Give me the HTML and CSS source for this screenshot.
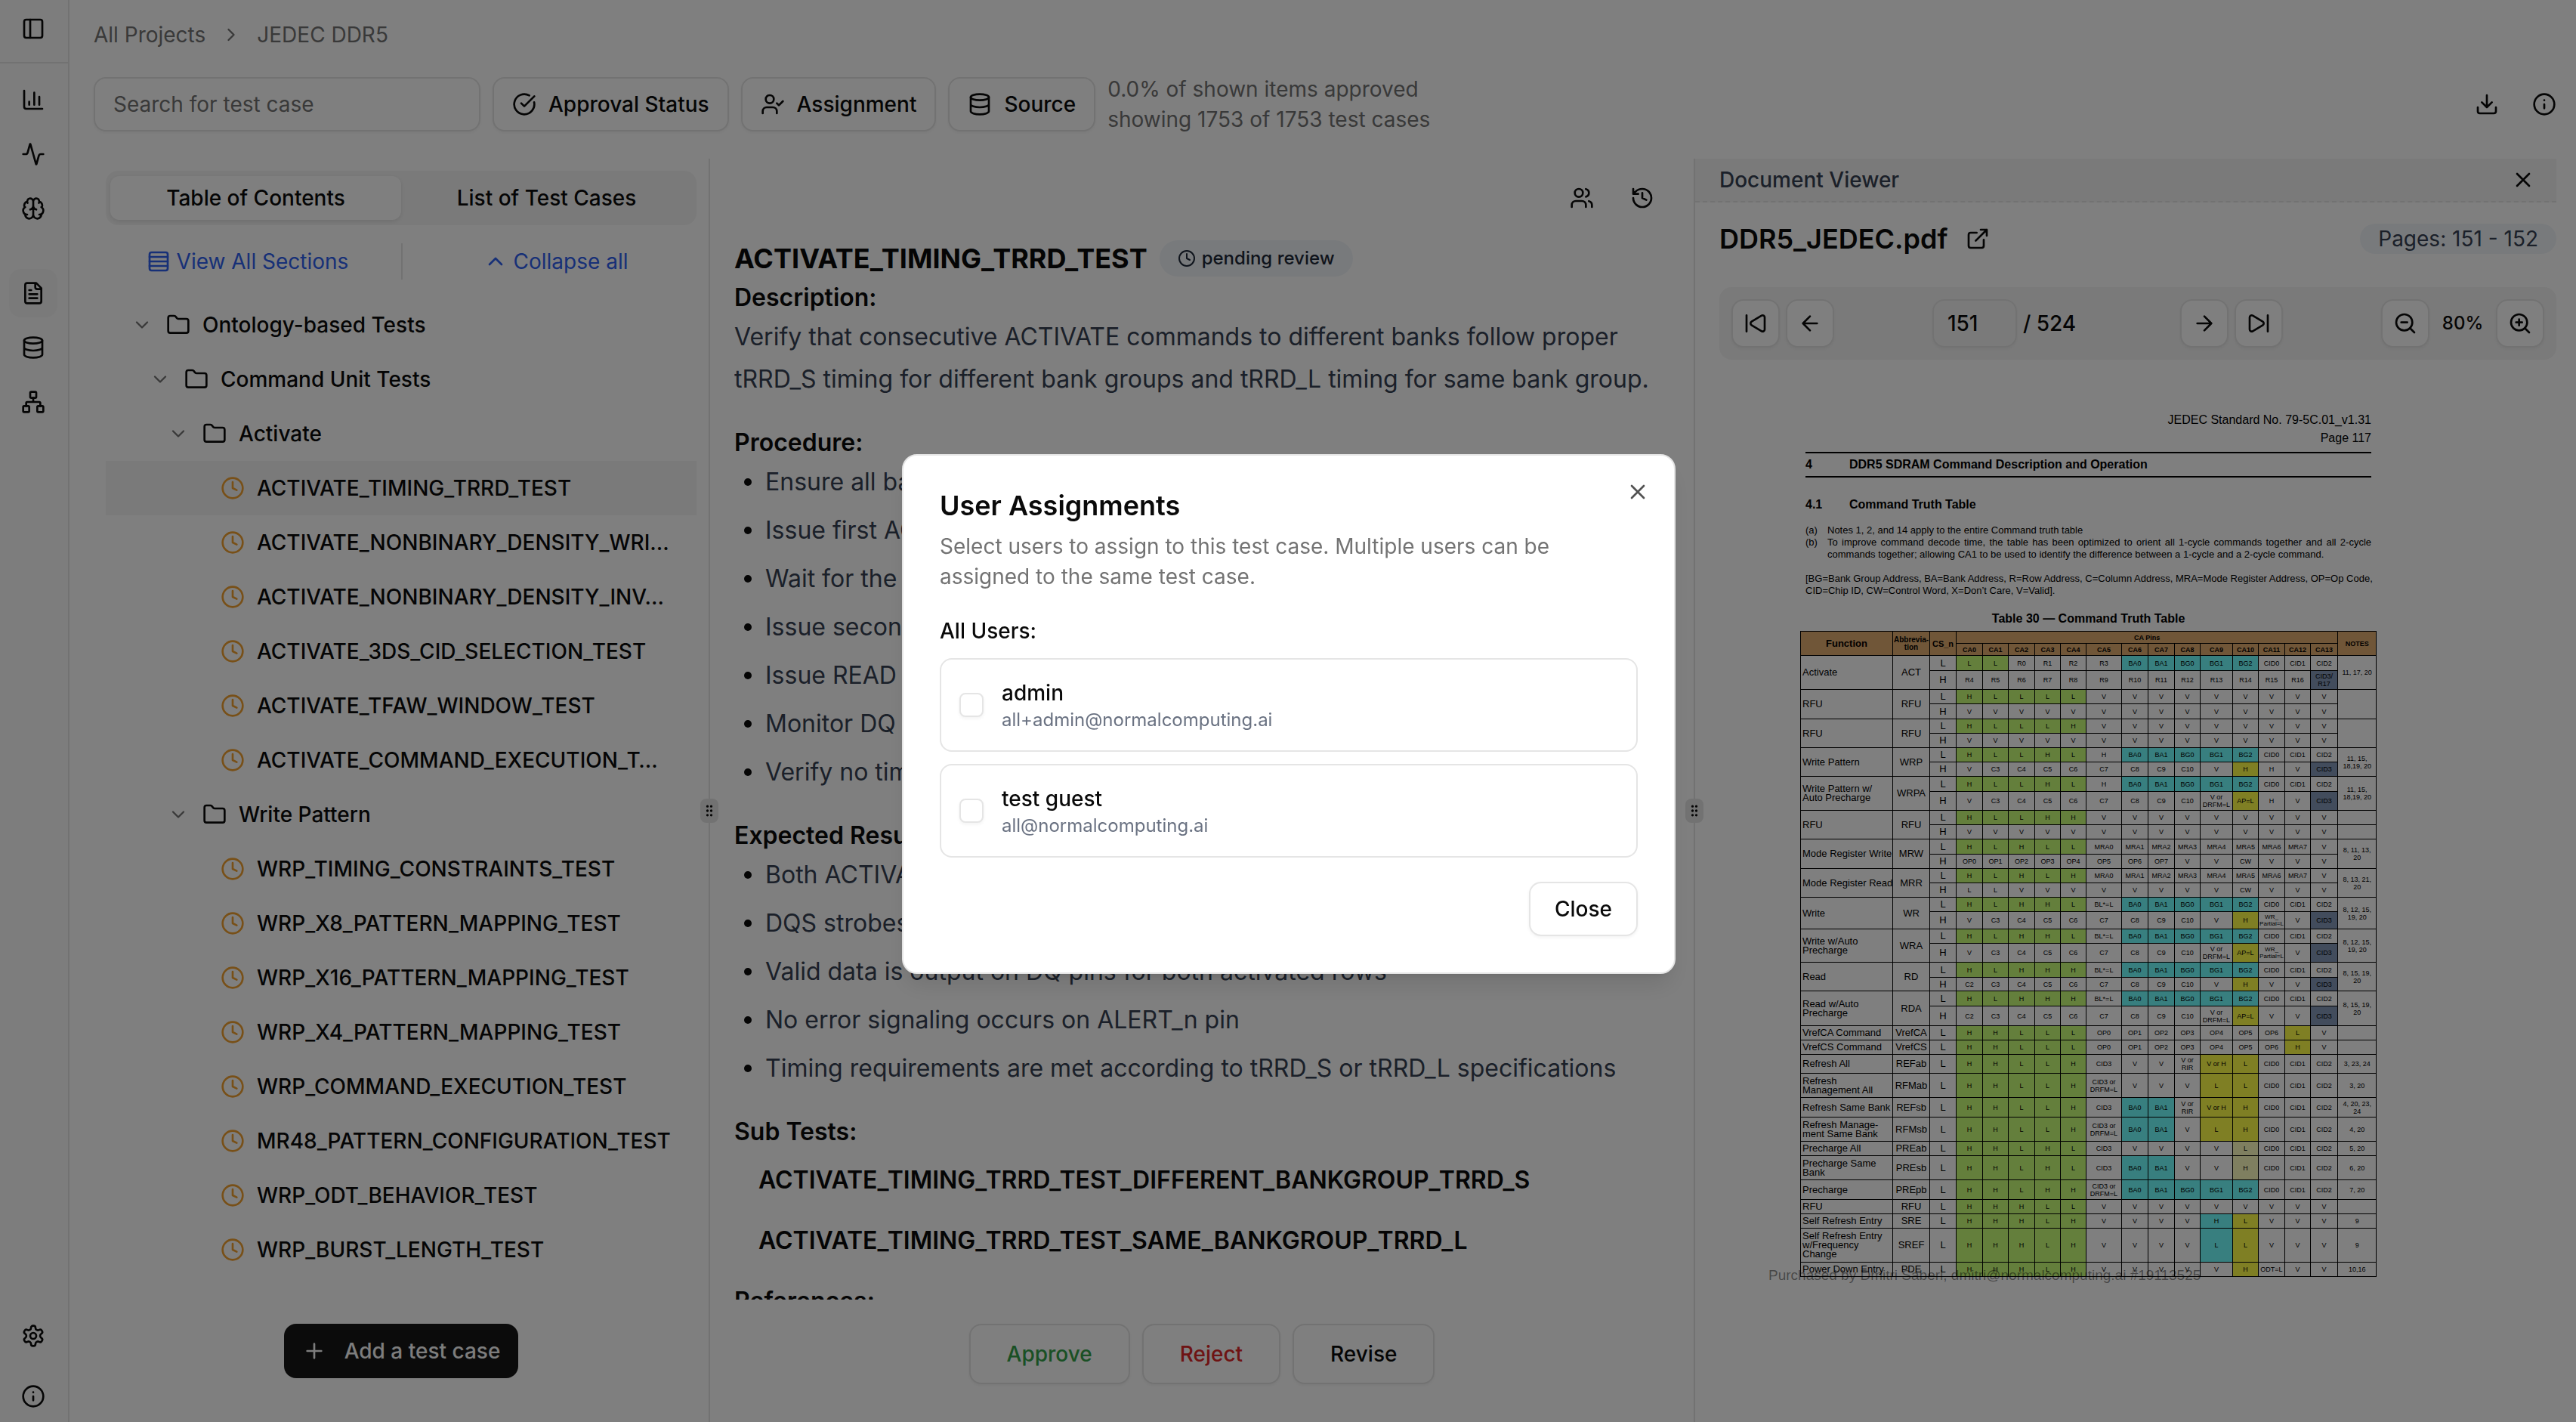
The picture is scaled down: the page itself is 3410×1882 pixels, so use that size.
FILE: index.html
```html
<!DOCTYPE html>
<html lang="en">
<head>
<meta charset="utf-8">
<title>JEDEC DDR5</title>
<link rel="stylesheet" href="styles.css">
</head>
<body>
<svg class="sprite" aria-hidden="true">
<symbol id="panel" viewBox="0 0 24 24"><rect width="18" height="18" x="3" y="3" rx="2"/><path d="M9 3v18"/></symbol>
<symbol id="chart" viewBox="0 0 24 24"><path d="M3 3v16a2 2 0 0 0 2 2h16M18 17V9M13 17V5M8 17v-3"/></symbol>
<symbol id="activity" viewBox="0 0 24 24"><path d="M22 12h-2.48a2 2 0 0 0-1.93 1.46l-2.35 8.36a.25.25 0 0 1-.48 0L9.24 2.18a.25.25 0 0 0-.48 0l-2.35 8.36A2 2 0 0 1 4.49 12H2"/></symbol>
<symbol id="brain" viewBox="0 0 24 24"><path d="M12 18V5M15 13a4.17 4.17 0 0 1-3-4 4.17 4.17 0 0 1-3 4M17.598 6.5A3 3 0 1 0 12 5a3 3 0 1 0-5.598 1.5M17.997 5.125a4 4 0 0 1 2.526 5.77M18 18a4 4 0 0 0 2-7.464M19.967 17.483A4 4 0 1 1 12 18a4 4 0 1 1-7.967-.517M6 18a4 4 0 0 1-2-7.464M6.003 5.125a4 4 0 0 0-2.526 5.77"/></symbol>
<symbol id="file" viewBox="0 0 24 24"><path d="M15 2H6a2 2 0 0 0-2 2v16a2 2 0 0 0 2 2h12a2 2 0 0 0 2-2V7ZM14 2v4a2 2 0 0 0 2 2h4M10 9H8M16 13H8M16 17H8"/></symbol>
<symbol id="database" viewBox="0 0 24 24"><ellipse cx="12" cy="5" rx="9" ry="3"/><path d="M3 5V19A9 3 0 0 0 21 19V5M3 12A9 3 0 0 0 21 12"/></symbol>
<symbol id="network" viewBox="0 0 24 24"><rect x="16" y="16" width="6" height="6" rx="1"/><rect x="2" y="16" width="6" height="6" rx="1"/><rect x="9" y="2" width="6" height="6" rx="1"/><path d="M5 16v-3a1 1 0 0 1 1-1h12a1 1 0 0 1 1 1v3M12 12V8"/></symbol>
<symbol id="settings" viewBox="0 0 24 24"><path d="M12.22 2h-.44a2 2 0 0 0-2 2v.18a2 2 0 0 1-1 1.73l-.43.25a2 2 0 0 1-2 0l-.15-.08a2 2 0 0 0-2.73.73l-.22.38a2 2 0 0 0 .73 2.73l.15.1a2 2 0 0 1 1 1.72v.51a2 2 0 0 1-1 1.74l-.15.09a2 2 0 0 0-.73 2.73l.22.38a2 2 0 0 0 2.73.73l.15-.08a2 2 0 0 1 2 0l.43.25a2 2 0 0 1 1 1.73V20a2 2 0 0 0 2 2h.44a2 2 0 0 0 2-2v-.18a2 2 0 0 1 1-1.73l.43-.25a2 2 0 0 1 2 0l.15.08a2 2 0 0 0 2.73-.73l.22-.39a2 2 0 0 0-.73-2.73l-.15-.08a2 2 0 0 1-1-1.74v-.5a2 2 0 0 1 1-1.74l.15-.09a2 2 0 0 0 .73-2.73l-.22-.38a2 2 0 0 0-2.73-.73l-.15.08a2 2 0 0 1-2 0l-.43-.25a2 2 0 0 1-1-1.73V4a2 2 0 0 0-2-2z"/><circle cx="12" cy="12" r="3"/></symbol>
<symbol id="info" viewBox="0 0 24 24"><circle cx="12" cy="12" r="10"/><path d="M12 16v-4M12 8h.01"/></symbol>
<symbol id="check" viewBox="0 0 24 24"><path d="M21.801 10A10 10 0 1 1 17 3.335M9 11l3 3L22 4"/></symbol>
<symbol id="usercheck" viewBox="0 0 24 24"><path d="m16 11 2 2 4-4M16 21v-2a4 4 0 0 0-4-4H6a4 4 0 0 0-4 4v2"/><circle cx="9" cy="7" r="4"/></symbol>
<symbol id="users" viewBox="0 0 24 24"><path d="M16 21v-2a4 4 0 0 0-4-4H6a4 4 0 0 0-4 4v2M16 3.128a4 4 0 0 1 0 7.744M22 21v-2a4 4 0 0 0-3-3.87"/><circle cx="9" cy="7" r="4"/></symbol>
<symbol id="history" viewBox="0 0 24 24"><path d="M3 12a9 9 0 1 0 9-9 9.75 9.75 0 0 0-6.74 2.74L3 8M3 3v5h5M12 7v5l4 2"/></symbol>
<symbol id="clock" viewBox="0 0 24 24"><circle cx="12" cy="12" r="10"/><path d="M12 6v6l4 2"/></symbol>
<symbol id="folder" viewBox="0 0 24 24"><path d="M20 20a2 2 0 0 0 2-2V8a2 2 0 0 0-2-2h-7.9a2 2 0 0 1-1.69-.9L9.6 3.9A2 2 0 0 0 7.93 3H4a2 2 0 0 0-2 2v13a2 2 0 0 0 2 2Z"/></symbol>
<symbol id="download" viewBox="0 0 24 24"><path d="M12 15V3M21 15v4a2 2 0 0 1-2 2H5a2 2 0 0 1-2-2v-4M7 10l5 5 5-5"/></symbol>
<symbol id="external" viewBox="0 0 24 24"><path d="M15 3h6v6M10 14 21 3M18 13v6a2 2 0 0 1-2 2H5a2 2 0 0 1-2-2V8a2 2 0 0 1 2-2h6"/></symbol>
<symbol id="skipback" viewBox="0 0 24 24"><path d="M17.971 4.285A2 2 0 0 1 21 6v12a2 2 0 0 1-3.029 1.715l-9.997-5.998a2 2 0 0 1-.003-3.432zM3 20V4"/></symbol>
<symbol id="skipfwd" viewBox="0 0 24 24"><path d="M21 4v16M6.029 4.285A2 2 0 0 0 3 6v12a2 2 0 0 0 3.029 1.715l9.997-5.998a2 2 0 0 0 .003-3.432z"/></symbol>
<symbol id="left" viewBox="0 0 24 24"><path d="m12 19-7-7 7-7M19 12H5"/></symbol>
<symbol id="right" viewBox="0 0 24 24"><path d="M5 12h14M12 5l7 7-7 7"/></symbol>
<symbol id="zoomout" viewBox="0 0 24 24"><circle cx="11" cy="11" r="8"/><path d="m21 21-4.35-4.35M8 11h6"/></symbol>
<symbol id="zoomin" viewBox="0 0 24 24"><circle cx="11" cy="11" r="8"/><path d="m21 21-4.35-4.35M8 11h6M11 8v6"/></symbol>
<symbol id="x" viewBox="0 0 24 24"><path d="M18 6 6 18M6 6l12 12"/></symbol>
<symbol id="plus" viewBox="0 0 24 24"><path d="M5 12h14M12 5v14"/></symbol>
<symbol id="rows" viewBox="0 0 24 24"><rect width="18" height="18" x="3" y="3" rx="2"/><path d="M21 7.5H3M21 12H3M21 16.5H3"/></symbol>
<symbol id="down" viewBox="0 0 24 24"><path d="m6 9 6 6 6-6"/></symbol>
<symbol id="up" viewBox="0 0 24 24"><path d="m18 15-6-6-6 6"/></symbol>
<symbol id="next" viewBox="0 0 24 24"><path d="m9 18 6-6-6-6"/></symbol>
<symbol id="grip" viewBox="0 0 24 24"><circle cx="9" cy="5" r="1"/><circle cx="9" cy="12" r="1"/><circle cx="9" cy="19" r="1"/><circle cx="15" cy="5" r="1"/><circle cx="15" cy="12" r="1"/><circle cx="15" cy="19" r="1"/></symbol>
</svg>

<div class="app">
<nav class="sidebar" aria-label="Main">
  <div class="side-top"><button class="side-item" aria-label="Toggle sidebar"><svg class="icon"><use href="#panel"/></svg></button></div>
  <div class="side-group">
    <a class="side-item" href="#" aria-label="Metrics"><svg class="icon"><use href="#chart"/></svg></a>
    <a class="side-item" href="#" aria-label="Activity"><svg class="icon"><use href="#activity"/></svg></a>
    <a class="side-item" href="#" aria-label="Models"><svg class="icon"><use href="#brain"/></svg></a>
  </div>
  <div class="side-group side-second">
    <a class="side-item active" href="#" aria-label="Test plan"><svg class="icon"><use href="#file"/></svg></a>
    <a class="side-item" href="#" aria-label="Data"><svg class="icon"><use href="#database"/></svg></a>
    <a class="side-item" href="#" aria-label="Ontology"><svg class="icon"><use href="#network"/></svg></a>
  </div>
  <div class="side-foot">
    <a class="side-item" href="#" aria-label="Settings"><svg class="icon"><use href="#settings"/></svg></a>
    <a class="side-item" href="#" aria-label="About"><svg class="icon"><use href="#info"/></svg></a>
  </div>
</nav>

<main class="main">
  <nav class="crumbs" aria-label="Breadcrumb"><a href="#">All Projects</a><svg class="icon small"><use href="#next"/></svg><a href="#">JEDEC DDR5</a></nav>
  <div class="filters">
    <input class="search" type="text" placeholder="Search for test case" aria-label="Search for test case">
    <button class="btn"><svg class="icon"><use href="#check"/></svg>Approval Status</button>
    <button class="btn"><svg class="icon"><use href="#usercheck"/></svg>Assignment</button>
    <button class="btn"><svg class="icon"><use href="#database"/></svg>Source</button>
    <p class="summary">0.0% of shown items approved<br>showing 1753 of 1753 test cases</p>
    <div class="filter-tools">
      <button class="bare" aria-label="Download"><svg class="icon"><use href="#download"/></svg></button>
      <button class="bare" aria-label="Info"><svg class="icon"><use href="#info"/></svg></button>
    </div>
  </div>

  <div class="panels">
    <section class="toc">
      <div class="tabs"><button class="tab selected">Table of Contents</button><button class="tab">List of Test Cases</button></div>
      <div class="toc-links">
        <button class="link view"><svg class="icon"><use href="#rows"/></svg>View All Sections</button>
        <button class="link collapse"><svg class="icon"><use href="#up"/></svg>Collapse all</button>
      </div>
      <ul class="tree">
        <li class="node l0"><svg class="icon chev"><use href="#down"/></svg><svg class="icon"><use href="#folder"/></svg>Ontology-based Tests</li>
        <li class="node l1"><svg class="icon chev"><use href="#down"/></svg><svg class="icon"><use href="#folder"/></svg>Command Unit Tests</li>
        <li class="node l2"><svg class="icon chev"><use href="#down"/></svg><svg class="icon"><use href="#folder"/></svg>Activate</li>
        <li class="node leaf current"><svg class="icon"><use href="#clock"/></svg>ACTIVATE_TIMING_TRRD_TEST</li>
        <li class="node leaf"><svg class="icon"><use href="#clock"/></svg>ACTIVATE_NONBINARY_DENSITY_WRI…</li>
        <li class="node leaf"><svg class="icon"><use href="#clock"/></svg>ACTIVATE_NONBINARY_DENSITY_INV…</li>
        <li class="node leaf"><svg class="icon"><use href="#clock"/></svg>ACTIVATE_3DS_CID_SELECTION_TEST</li>
        <li class="node leaf"><svg class="icon"><use href="#clock"/></svg>ACTIVATE_TFAW_WINDOW_TEST</li>
        <li class="node leaf"><svg class="icon"><use href="#clock"/></svg>ACTIVATE_COMMAND_EXECUTION_T…</li>
        <li class="node l2"><svg class="icon chev"><use href="#down"/></svg><svg class="icon"><use href="#folder"/></svg>Write Pattern</li>
        <li class="node leaf"><svg class="icon"><use href="#clock"/></svg>WRP_TIMING_CONSTRAINTS_TEST</li>
        <li class="node leaf"><svg class="icon"><use href="#clock"/></svg>WRP_X8_PATTERN_MAPPING_TEST</li>
        <li class="node leaf"><svg class="icon"><use href="#clock"/></svg>WRP_X16_PATTERN_MAPPING_TEST</li>
        <li class="node leaf"><svg class="icon"><use href="#clock"/></svg>WRP_X4_PATTERN_MAPPING_TEST</li>
        <li class="node leaf"><svg class="icon"><use href="#clock"/></svg>WRP_COMMAND_EXECUTION_TEST</li>
        <li class="node leaf"><svg class="icon"><use href="#clock"/></svg>MR48_PATTERN_CONFIGURATION_TEST</li>
        <li class="node leaf"><svg class="icon"><use href="#clock"/></svg>WRP_ODT_BEHAVIOR_TEST</li>
        <li class="node leaf"><svg class="icon"><use href="#clock"/></svg>WRP_BURST_LENGTH_TEST</li>
      </ul>
      <button class="add"><svg class="icon"><use href="#plus"/></svg>Add a test case</button>
    </section>

    <div class="divider"><span class="handle"><svg class="icon tiny"><use href="#grip"/></svg></span></div>

    <section class="detail">
      <div class="detail-tools">
        <button class="bare" aria-label="Assign users"><svg class="icon"><use href="#users"/></svg></button>
        <button class="bare" aria-label="History"><svg class="icon"><use href="#history"/></svg></button>
      </div>
      <article class="case">
        <div class="case-title"><h1>ACTIVATE_TIMING_TRRD_TEST</h1><span class="status"><svg class="icon mini"><use href="#clock"/></svg>pending review</span></div>
        <h2>Description:</h2>
        <p>Verify that consecutive ACTIVATE commands to different banks follow proper<br>tRRD_S timing for different bank groups and tRRD_L timing for same bank group.</p>
        <h2>Procedure:</h2>
        <ul>
          <li>Ensure all banks are precharged</li>
          <li>Issue first ACTIVATE command</li>
          <li>Wait for the tRRD interval</li>
          <li>Issue second ACTIVATE command</li>
          <li>Issue READ commands</li>
          <li>Monitor DQ pins for data</li>
          <li>Verify no timing violations</li>
        </ul>
        <h2>Expected Results:</h2>
        <ul>
          <li>Both ACTIVATE commands complete</li>
          <li>DQS strobes toggle correctly</li>
          <li>Valid data is output on DQ pins for both activated rows</li>
          <li>No error signaling occurs on ALERT_n pin</li>
          <li>Timing requirements are met according to tRRD_S or tRRD_L specifications</li>
        </ul>
        <h2>Sub Tests:</h2>
        <div class="subtests"><h3>ACTIVATE_TIMING_TRRD_TEST_DIFFERENT_BANKGROUP_TRRD_S</h3><h3>ACTIVATE_TIMING_TRRD_TEST_SAME_BANKGROUP_TRRD_L</h3></div>
        <h2>References:</h2>
      </article>
      <div class="decision">
        <button class="btn tall approve">Approve</button><button class="btn tall reject">Reject</button><button class="btn tall">Revise</button>
      </div>
    </section>

    <div class="divider"><span class="handle"><svg class="icon tiny"><use href="#grip"/></svg></span></div>

    <section class="viewer">
      <header class="viewer-head"><span>Document Viewer</span><button class="bare" aria-label="Close viewer"><svg class="icon"><use href="#x"/></svg></button></header>
      <div class="viewer-body">
        <div class="doc-title"><h2>DDR5_JEDEC.pdf</h2><a href="#" aria-label="Open document"><svg class="icon"><use href="#external"/></svg></a><span class="pages">Pages: 151 - 152</span></div>
        <div class="toolbar">
          <div class="group"><button class="sq" aria-label="First page"><svg class="icon"><use href="#skipback"/></svg></button><button class="sq" aria-label="Previous page"><svg class="icon"><use href="#left"/></svg></button></div>
          <label class="group pager"><input type="text" value="151" aria-label="Page"><span>/ 524</span></label>
          <div class="group"><button class="sq" aria-label="Next page"><svg class="icon"><use href="#right"/></svg></button><button class="sq" aria-label="Last page"><svg class="icon"><use href="#skipfwd"/></svg></button></div>
          <div class="group zoom"><button class="sq" aria-label="Zoom out"><svg class="icon"><use href="#zoomout"/></svg></button><span class="level">80%</span><button class="sq" aria-label="Zoom in"><svg class="icon"><use href="#zoomin"/></svg></button></div>
        </div>
        <div class="pdf">
          <div class="pdf-text">
            <p class="running">JEDEC Standard No. 79-5C.01_v1.31<br>Page 117</p>
            <h3 class="chapter"><span>4</span>DDR5 SDRAM Command Description and Operation</h3>
            <h4 class="clause"><span>4.1</span>Command Truth Table</h4>
            <dl class="notes"><dt>(a)</dt><dd>Notes 1, 2, and 14 apply to the entire Command truth table</dd><dt>(b)</dt><dd>To improve command decode time, the table has been optimized to orient all 1-cycle commands together and all 2-cycle commands together; allowing CA1 to be used to identify the difference between a 1-cycle and a 2-cycle command.</dd></dl>
            <p class="legend">[BG=Bank Group Address, BA=Bank Address, R=Row Address, C=Column Address, MRA=Mode Register Address, OP=Op Code,<br>CID=Chip ID, CW=Control Word, X=Don’t Care, V=Valid].</p>
          </div>
          <table class="truth">
<caption>Table 30 — Command Truth Table</caption>
<colgroup><col class="w122"><col class="w49"><col class="w35"><col class="w35"><col class="w34"><col class="w35"><col class="w34"><col class="w34"><col class="w47"><col class="w35"><col class="w35"><col class="w34"><col class="w43"><col class="w34"><col class="w35"><col class="w34"><col class="w36"><col class="w51"></colgroup>
<thead>
<tr class="r16"><th rowspan="2" class="big">Function<th rowspan="2" class="mid">Abbrevia-<br>tion<th rowspan="2" class="cs-head">CS_n<th colspan="14">CA Pins<th rowspan="2">NOTES
<tr class="r16"><th>CA0<th>CA1<th>CA2<th>CA3<th>CA4<th>CA5<th>CA6<th>CA7<th>CA8<th>CA9<th>CA10<th>CA11<th>CA12<th>CA13
</thead>
<tbody>
<tr class="r20"><td rowspan="2" class="fn">Activate<td rowspan="2" class="ab">ACT<td class="ab">L<td class="g">L<td class="g">L<td>R0<td>R1<td>R2<td>R3<td class="c">BA0<td class="c">BA1<td class="c">BG0<td class="c">BG1<td class="c">BG2<td>CID0<td>CID1<td>CID2<td rowspan="2">11, 17, 20
<tr class="r25"><td class="ab">H<td>R4<td>R5<td>R6<td>R7<td>R8<td>R9<td>R10<td>R11<td>R12<td>R13<td>R14<td>R15<td>R16<td class="s">CID3/<br>R17
<tr><td rowspan="2" class="fn">RFU<td rowspan="2" class="ab">RFU<td class="ab">L<td class="g">H<td class="g">L<td class="g">L<td class="g">L<td class="g">L<td>V<td>V<td>V<td>V<td>V<td>V<td>V<td>V<td>V<td rowspan="2">
<tr class="r20"><td class="ab">H<td>V<td>V<td>V<td>V<td>V<td>V<td>V<td>V<td>V<td>V<td>V<td>V<td>V<td>V
<tr><td rowspan="2" class="fn">RFU<td rowspan="2" class="ab">RFU<td class="ab">L<td class="g">H<td class="g">L<td class="g">L<td class="g">L<td class="g">H<td>V<td>V<td>V<td>V<td>V<td>V<td>V<td>V<td>V<td rowspan="2">
<tr><td class="ab">H<td>V<td>V<td>V<td>V<td>V<td>V<td>V<td>V<td>V<td>V<td>V<td>V<td>V<td>V
<tr><td rowspan="2" class="fn">Write Pattern<td rowspan="2" class="ab">WRP<td class="ab">L<td class="g">H<td class="g">L<td class="g">L<td class="g">H<td class="g">L<td>H<td class="c">BA0<td class="c">BA1<td class="c">BG0<td class="c">BG1<td class="c">BG2<td>CID0<td>CID1<td>CID2<td rowspan="2">11, 15,<br>18,19, 20
<tr><td class="ab">H<td>V<td>C3<td>C4<td>C5<td>C6<td>C7<td>C8<td>C9<td>C10<td>V<td class="y">H<td>H<td>V<td class="s">CID3
<tr class="r20"><td rowspan="2" class="fn">Write Pattern w/<br>Auto Precharge<td rowspan="2" class="ab">WRPA<td class="ab">L<td class="g">H<td class="g">L<td class="g">L<td class="g">H<td class="g">L<td>H<td class="c">BA0<td class="c">BA1<td class="c">BG0<td class="c">BG1<td class="c">BG2<td>CID0<td>CID1<td>CID2<td rowspan="2">11, 15,<br>18,19, 20
<tr class="r25"><td class="ab">H<td>V<td>C3<td>C4<td>C5<td>C6<td>C7<td>C8<td>C9<td>C10<td>V or<br>DRFM=L<td class="y">AP=L<td>H<td>V<td class="s">CID3
<tr><td rowspan="2" class="fn">RFU<td rowspan="2" class="ab">RFU<td class="ab">L<td class="g">H<td class="g">L<td class="g">L<td class="g">H<td class="g">H<td>V<td>V<td>V<td>V<td>V<td>V<td>V<td>V<td>V<td>
<tr><td class="ab">H<td>V<td>V<td>V<td>V<td>V<td>V<td>V<td>V<td>V<td>V<td>V<td>V<td>V<td>V<td>
<tr class="r20"><td rowspan="2" class="fn">Mode Register Write<td rowspan="2" class="ab">MRW<td class="ab">L<td class="g">H<td class="g">L<td class="g">H<td class="g">L<td class="g">L<td>MRA0<td>MRA1<td>MRA2<td>MRA3<td>MRA4<td>MRA5<td>MRA6<td>MRA7<td>V<td rowspan="2">8, 11, 13,<br>20
<tr><td class="ab">H<td>OP0<td>OP1<td>OP2<td>OP3<td>OP4<td>OP5<td>OP6<td>OP7<td>V<td>V<td>CW<td>V<td>V<td>V
<tr><td rowspan="2" class="fn">Mode Register Read<td rowspan="2" class="ab">MRR<td class="ab">L<td class="g">H<td class="g">L<td class="g">H<td class="g">L<td class="g">H<td>MRA0<td>MRA1<td>MRA2<td>MRA3<td>MRA4<td>MRA5<td>MRA6<td>MRA7<td>V<td rowspan="2">8, 13, 21,<br>20
<tr><td class="ab">H<td>L<td>L<td>V<td>V<td>V<td>V<td>V<td>V<td>V<td>V<td>CW<td>V<td>V<td>V
<tr><td rowspan="2" class="fn">Write<td rowspan="2" class="ab">WR<td class="ab">L<td class="g">H<td class="g">L<td class="g">H<td class="g">H<td class="g">L<td>BL*=L<td class="c">BA0<td class="c">BA1<td class="c">BG0<td class="c">BG1<td class="c">BG2<td>CID0<td>CID1<td>CID2<td rowspan="2">8, 12, 15,<br>19, 20
<tr class="r23"><td class="ab">H<td>V<td>C3<td>C4<td>C5<td>C6<td>C7<td>C8<td>C9<td>C10<td>V<td class="y">H<td class="wr">WR_<br>Partial=L<td>V<td class="s">CID3
<tr><td rowspan="2" class="fn">Write w/Auto<br>Precharge<td rowspan="2" class="ab">WRA<td class="ab">L<td class="g">H<td class="g">L<td class="g">H<td class="g">H<td class="g">L<td>BL*=L<td class="c">BA0<td class="c">BA1<td class="c">BG0<td class="c">BG1<td class="c">BG2<td>CID0<td>CID1<td>CID2<td rowspan="2">8, 12, 15,<br>19, 20
<tr class="r25"><td class="ab">H<td>V<td>C3<td>C4<td>C5<td>C6<td>C7<td>C8<td>C9<td>C10<td>V or<br>DRFM=L<td class="y">AP=L<td class="wr">WR_<br>Partial=L<td>V<td class="s">CID3
<tr class="r20"><td rowspan="2" class="fn">Read<td rowspan="2" class="ab">RD<td class="ab">L<td class="g">H<td class="g">L<td class="g">H<td class="g">H<td class="g">H<td>BL*=L<td class="c">BA0<td class="c">BA1<td class="c">BG0<td class="c">BG1<td class="c">BG2<td>CID0<td>CID1<td>CID2<td rowspan="2">8, 15, 19,<br>20
<tr class="r18"><td class="ab">H<td>C2<td>C3<td>C4<td>C5<td>C6<td>C7<td>C8<td>C9<td>C10<td>V<td class="y">H<td>V<td>V<td class="s">CID3
<tr class="r20"><td rowspan="2" class="fn">Read w/Auto<br>Precharge<td rowspan="2" class="ab">RDA<td class="ab">L<td class="g">H<td class="g">L<td class="g">H<td class="g">H<td class="g">H<td>BL*=L<td class="c">BA0<td class="c">BA1<td class="c">BG0<td class="c">BG1<td class="c">BG2<td>CID0<td>CID1<td>CID2<td rowspan="2">8, 15, 19,<br>20
<tr class="r26"><td class="ab">H<td>C2<td>C3<td>C4<td>C5<td>C6<td>C7<td>C8<td>C9<td>C10<td>V or<br>DRFM=L<td class="y">AP=L<td>V<td>V<td class="s">CID3
<tr><td class="fn">VrefCA Command<td class="ab">VrefCA<td class="ab">L<td class="g">H<td class="g">H<td class="g">L<td class="g">L<td class="g">L<td>OP0<td>OP1<td>OP2<td>OP3<td>OP4<td>OP5<td>OP6<td class="y">L<td>V<td>
<tr><td class="fn">VrefCS Command<td class="ab">VrefCS<td class="ab">L<td class="g">H<td class="g">H<td class="g">L<td class="g">L<td class="g">L<td>OP0<td>OP1<td>OP2<td>OP3<td>OP4<td>OP5<td>OP6<td class="y">H<td>V<td>
<tr class="r25"><td class="fn">Refresh All<td class="ab">REFab<td class="ab">L<td class="g">H<td class="g">H<td class="g">L<td class="g">L<td class="g">H<td>CID3<td>V<td>V<td>V or<br>RIR<td class="y">V or H<td class="y">L<td>CID0<td>CID1<td>CID2<td>3, 23, 24
<tr class="r32"><td class="fn">Refresh<br>Management All<td class="ab">RFMab<td class="ab">L<td class="g">H<td class="g">H<td class="g">L<td class="g">L<td class="g">H<td>CID3 or<br>DRFM=L<td>V<td>V<td>V<td class="y">L<td class="y">L<td>CID0<td>CID1<td>CID2<td>3, 20
<tr class="r26"><td class="fn">Refresh Same Bank<td class="ab">REFsb<td class="ab">L<td class="g">H<td class="g">H<td class="g">L<td class="g">L<td class="g">H<td>CID3<td class="c">BA0<td class="c">BA1<td>V or<br>RIR<td class="y">V or H<td class="y">H<td>CID0<td>CID1<td>CID2<td>4, 20, 23,<br>24
<tr class="r32"><td class="fn">Refresh Manage-<br>ment Same Bank<td class="ab">RFMsb<td class="ab">L<td class="g">H<td class="g">H<td class="g">L<td class="g">L<td class="g">H<td>CID3 or<br>DRFM=L<td class="c">BA0<td class="c">BA1<td>V<td class="y">L<td class="y">H<td>CID0<td>CID1<td>CID2<td>4, 20
<tr><td class="fn">Precharge All<td class="ab">PREab<td class="ab">L<td class="g">H<td class="g">H<td class="g">L<td class="g">H<td class="g">L<td>CID3<td>V<td>V<td>V<td>V<td class="p">L<td>CID0<td>CID1<td>CID2<td>5, 20
<tr class="r32"><td class="fn">Precharge Same<br>Bank<td class="ab">PREsb<td class="ab">L<td class="g">H<td class="g">H<td class="g">L<td class="g">H<td class="g">L<td>CID3<td class="c">BA0<td class="c">BA1<td>V<td>V<td class="p">H<td>CID0<td>CID1<td>CID2<td>6, 20
<tr class="r26"><td class="fn">Precharge<td class="ab">PREpb<td class="ab">L<td class="g">H<td class="g">H<td class="g">L<td class="g">H<td class="g">H<td>CID3 or<br>DRFM=L<td class="c">BA0<td class="c">BA1<td class="c">BG0<td class="c">BG1<td class="c">BG2<td>CID0<td>CID1<td>CID2<td>7, 20
<tr><td class="fn">RFU<td class="ab">RFU<td class="ab">L<td class="g">H<td class="g">H<td class="g">H<td class="g">L<td class="g">L<td>V<td>V<td>V<td>V<td>V<td>V<td>V<td>V<td>V<td>
<tr><td class="fn">Self Refresh Entry<td class="ab">SRE<td class="ab">L<td class="g">H<td class="g">H<td class="g">H<td class="g">L<td class="g">H<td>V<td>V<td>V<td>V<td class="c">H<td class="y">L<td>V<td>V<td>V<td>9
<tr class="r45"><td class="fn">Self Refresh Entry<br>w/Frequency<br>Change<td class="ab">SREF<td class="ab">L<td class="g">H<td class="g">H<td class="g">H<td class="g">L<td class="g">H<td>V<td>V<td>V<td>V<td class="c">L<td class="y">L<td>V<td>V<td>V<td>9
<tr><td class="fn">Power Down Entry<td class="ab">PDE<td class="ab">L<td class="g">H<td class="g">H<td class="g">H<td class="g">L<td class="g">H<td>V<td>V<td>V<td>V<td>V<td class="y">H<td>ODT=L<td>V<td>V<td>10,16
</tbody>
</table>
          <p class="watermark">Purchased by Dmitri Saberi, dmitri@normalcomputing.ai #19113525</p>
        </div>
      </div>
    </section>
  </div>
</main>
</div>

<div class="overlay">
  <div class="dialog" role="dialog" aria-modal="true" aria-labelledby="dlg-title">
    <h2 id="dlg-title">User Assignments</h2>
    <p class="dlg-text">Select users to assign to this test case. Multiple users can be<br>assigned to the same test case.</p>
    <h3>All Users:</h3>
    <div class="user-list">
      <label class="user"><input type="checkbox"><span class="who"><span class="name">admin</span><span class="mail">all+admin@normalcomputing.ai</span></span></label>
      <label class="user"><input type="checkbox"><span class="who"><span class="name">test guest</span><span class="mail">all@normalcomputing.ai</span></span></label>
    </div>
    <div class="dlg-foot"><button class="btn wide">Close</button></div>
    <button class="dlg-x" aria-label="Close dialog"><svg class="icon"><use href="#x"/></svg></button>
  </div>
</div>
</body>
</html>
```
FILE: styles.css
```css
* { box-sizing: border-box; }
:root {
  --ink: #0a0a0a;
  --muted: #737373;
  --line: #e5e5e5;
  --soft: #f5f5f5;
  --body: #364153;
}
html, body { height: 100%; }
body { margin: 0; overflow: hidden; background: #fff; color: var(--ink); font: 400 28px/40px Inter, "Liberation Sans", sans-serif; }
h1, h2, h3, h4, p, ul, dl, dd { margin: 0; padding: 0; }
ul { list-style: none; }
button, input { font: inherit; color: inherit; margin: 0; }
button { padding: 0; border: 0; background: none; }
a { color: inherit; text-decoration: none; }
.sprite { display: none; }
.icon { width: 32px; height: 32px; flex: none; fill: none; stroke: currentColor; stroke-width: 2; stroke-linecap: round; stroke-linejoin: round; }
.icon.small { width: 28px; height: 28px; }
.icon.mini { width: 24px; height: 24px; }
.icon.tiny { width: 20px; height: 20px; }

.app { display: flex; height: 100%; }

/* Sidebar */
.sidebar { width: 92px; flex: none; display: flex; flex-direction: column; background: #fafafa; border-right: 2px solid var(--line); }
.side-top { height: 84px; padding: 6px 12px; border-bottom: 2px solid var(--line); }
.side-group { display: flex; flex-direction: column; gap: 8px; padding: 16px 12px 0; }
.side-second { padding-top: 48px; }
.side-item { width: 64px; height: 64px; display: flex; align-items: center; justify-content: center; border-radius: 16px; }
.side-item.active { background: var(--soft); }
.side-foot { margin-top: auto; display: flex; flex-direction: column; gap: 16px; padding: 0 12px 2px; }

/* Page head */
.main { flex: 1; min-width: 0; display: flex; flex-direction: column; padding: 26px 26px 0 32px; }
.crumbs { display: flex; align-items: center; gap: 20px; color: var(--muted); }
.filters { display: flex; align-items: center; gap: 16px; margin: 32px 0; }
.search { width: 512px; height: 72px; padding: 0 24px; border: 2px solid var(--line); border-radius: 16px; background: transparent; box-shadow: 0 2px 4px rgba(0,0,0,.05); }
.search::placeholder { color: var(--muted); opacity: 1; }
.btn { height: 72px; display: flex; align-items: center; justify-content: center; gap: 16px; padding: 0 24px; border: 2px solid var(--line); border-radius: 16px; background: #fff; font-weight: 500; box-shadow: 0 2px 4px rgba(0,0,0,.05); }
.btn.tall { height: 80px; padding: 0 48px; }
.btn.wide { padding: 0 32px; }
.summary { color: var(--muted); }
.filter-tools { margin-left: auto; display: flex; gap: 44px; }
.bare { display: flex; align-items: center; }

/* Panels */
.panels { flex: 1; min-height: 0; display: grid; grid-template-columns: 814fr 2px 1302fr 2px 1140fr; }
.panels > section { min-width: 0; min-height: 0; }
.divider { position: relative; background: var(--line); }
.handle { position: absolute; left: -11px; top: 847px; width: 24px; height: 32px; display: flex; align-items: center; justify-content: center; border-radius: 8px; background: var(--line); }

.toc { display: flex; flex-direction: column; padding: 16px 16px 58px; }
.tabs { height: 72px; display: flex; align-items: center; padding: 0 6px; border-radius: 16px; background: var(--soft); }
.tab { flex: 1; height: 58px; border-radius: 12px; font-weight: 500; }
.tab.selected { background: #fff; box-shadow: 0 2px 6px rgba(0,0,0,.1); }
.toc-links { display: grid; grid-template-columns: 1fr 1fr; margin: 24px 0; color: #2f60ee; }
.link { height: 48px; display: flex; align-items: center; justify-content: center; gap: 8px; }
.link.view { padding-right: 16px; }
.link.collapse { padding-left: 16px; border-left: 2px solid var(--line); }
.tree { flex: 1; font-weight: 500; }
.node { height: 72px; display: flex; align-items: center; gap: 16px; white-space: nowrap; }
.chev.icon { width: 28px; height: 28px; margin: 0 2px; color: var(--muted); }
.l0 { padding-left: 32px; }
.l1 { padding-left: 56px; }
.l2 { padding-left: 80px; }
.leaf { padding-left: 152px; }
.leaf .icon { color: #f0a030; }
.current { background: var(--soft); }
.add { align-self: center; height: 72px; display: flex; align-items: center; gap: 24px; padding: 0 24px; border-radius: 16px; background: #171717; color: #fafafa; font-weight: 500; }

/* Test case */
.detail { display: flex; flex-direction: column; padding: 16px 32px 50px; }
.detail-tools { height: 72px; display: flex; align-items: center; justify-content: flex-end; gap: 48px; padding-right: 20px; }
.case { flex: 1; min-height: 0; overflow: hidden; margin: 20px 0 32px; font-size: 32px; line-height: 56px; color: var(--body); }
.case-title { display: flex; align-items: center; gap: 16px; margin-bottom: 4px; }
h1 { font-size: 36px; line-height: 48px; font-weight: 700; color: var(--ink); }
.status { display: flex; align-items: center; gap: 8px; height: 48px; padding: 0 24px; border-radius: 24px; background: #f1f5f9; color: #1e2939; font-size: 24px; font-weight: 500; }
.case h2, .case h3 { font-size: 32px; line-height: 48px; font-weight: 600; color: var(--ink); }
.case p, .case ul { margin-bottom: 32px; white-space: nowrap; }
.case li { display: flex; align-items: center; gap: 18px; padding-left: 13px; }
.case li + li { margin-top: 8px; }
.case li::before { content: ""; width: 10px; height: 10px; border-radius: 5px; background: var(--ink); }
.subtests { display: flex; flex-direction: column; gap: 32px; padding: 16px 32px 32px; }
.decision { display: flex; justify-content: center; gap: 16px; }
.approve { color: #34a048; }
.reject { color: #dc2626; }

/* Document viewer */
.viewer-head { height: 58px; display: flex; align-items: center; justify-content: space-between; padding: 0 28px 0 32px; border-bottom: 2px dashed var(--line); background: var(--soft); color: var(--body); font-weight: 500; }
.viewer-head .bare { color: var(--ink); }
.viewer-body { padding: 24px 0 0 32px; }
.doc-title { display: flex; align-items: center; gap: 24px; height: 48px; }
.doc-title h2 { font-size: 36px; line-height: 48px; font-weight: 600; }
.doc-title a { display: flex; }
.pages { margin-left: auto; padding: 0 24px; border-radius: 20px; background: #f1f5f9; color: var(--body); }
.toolbar { display: flex; justify-content: space-between; height: 96px; margin-top: 40px; padding: 16px; border-radius: 16px; background: var(--soft); }
.group { display: flex; align-items: center; gap: 8px; }
.sq { width: 64px; height: 64px; display: flex; align-items: center; justify-content: center; border: 2px solid var(--line); border-radius: 16px; background: #fff; box-shadow: 0 2px 4px rgba(0,0,0,.05); }
.pager { font-weight: 500; padding-right: 8px; }
.pager input { width: 112px; height: 64px; padding: 0 18px; border: 2px solid var(--line); border-radius: 16px; background: transparent; box-shadow: 0 2px 4px rgba(0,0,0,.05); }
.zoom { gap: 16px; font-size: 24px; font-weight: 500; }
.level { width: 56px; text-align: center; }

/* PDF page */
.pdf { position: relative; width: 869px; padding: 68px 0 0 107px; font-family: "Liberation Sans", Arial, sans-serif; color: #000; }
.pdf-text { padding: 0 6px 0 7px; font-size: 13px; line-height: 16px; }
.running { text-align: right; font-size: 16px; line-height: 24px; }
.chapter { display: flex; margin-top: 6px; border: 2px solid #000; border-width: 2px 0; font-size: 16px; line-height: 30px; }
.clause { display: flex; margin: 24px 0 14px; font-size: 16px; line-height: 24px; }
.chapter span, .clause span { width: 58px; }
.notes { display: grid; grid-template-columns: 29px 1fr; margin-bottom: 16px; text-align: justify; }
.legend { white-space: nowrap; }
.truth { width: 762px; table-layout: fixed; border-collapse: collapse; margin-top: 17px; font-size: 9px; line-height: 10px; text-align: center; }
.truth caption { padding-bottom: 4px; font-size: 16px; line-height: 24px; font-weight: 700; }
.truth tr { height: 19px; }
.truth td, .truth th { padding: 0; border: 1px solid #000; white-space: nowrap; }
.truth th { background: #e0ac70; }
.truth .big { font-size: 13px; }
.truth .mid { font-size: 10px; }
.truth .cs-head { font-size: 11px; }
.truth .fn { padding-left: 2px; text-align: left; font-size: 13px; line-height: 12px; }
.truth .ab { font-size: 13px; line-height: 12px; }
.truth .wr { font-size: 8px; line-height: 9px; }
.truth .g { background: #c8ff78; }
.truth .c { background: #70ffff; }
.truth .y { background: #ffff48; }
.truth .s { background: #8498b8; }
.truth .p { background: #ffffc0; }
.truth .r16 { height: 16px; }
.truth .r18 { height: 18px; }
.truth .r20 { height: 20px; }
.truth .r23 { height: 23px; }
.truth .r25 { height: 25px; }
.truth .r26 { height: 26px; }
.truth .r32 { height: 32px; }
.truth .r45 { height: 45px; }
.w34 { width: 34px; }
.w35 { width: 35px; }
.w36 { width: 36px; }
.w43 { width: 43px; }
.w47 { width: 47px; }
.w49 { width: 49px; }
.w51 { width: 51px; }
.w122 { width: 122px; }
.watermark { position: absolute; left: 65px; bottom: -10px; font-size: 19px; line-height: 24px; color: rgba(0,0,0,.45); white-space: nowrap; }

/* Dialog */
.overlay { position: fixed; inset: 0; display: flex; align-items: center; justify-content: center; padding: 8px 0 0 2px; background: rgba(0,0,0,.5); }
.dialog { position: relative; width: 1024px; padding: 48px; border: 2px solid var(--line); border-radius: 20px; background: #fff; box-shadow: 0 20px 30px -6px rgba(0,0,0,.1), 0 8px 12px -8px rgba(0,0,0,.1); }
.dialog h2 { font-size: 36px; line-height: 36px; font-weight: 600; }
.dlg-text { margin: 16px 0 32px; color: var(--muted); }
.dialog h3 { font-size: 28px; font-weight: 500; }
.user-list { display: flex; flex-direction: column; gap: 16px; margin: 16px 0 32px; }
.user { display: flex; align-items: center; gap: 24px; padding: 24px; border: 2px solid var(--line); border-radius: 16px; }
.user input { appearance: none; width: 32px; height: 32px; border: 2px solid var(--line); border-radius: 8px; background: #fff; box-shadow: 0 2px 4px rgba(0,0,0,.05); }
.who { display: flex; flex-direction: column; }
.name { font-weight: 500; }
.mail { font-size: 24px; line-height: 32px; color: #6a7282; }
.dlg-foot { display: flex; justify-content: flex-end; }
.dlg-x { position: absolute; top: 32px; right: 32px; display: flex; opacity: .7; }
```
